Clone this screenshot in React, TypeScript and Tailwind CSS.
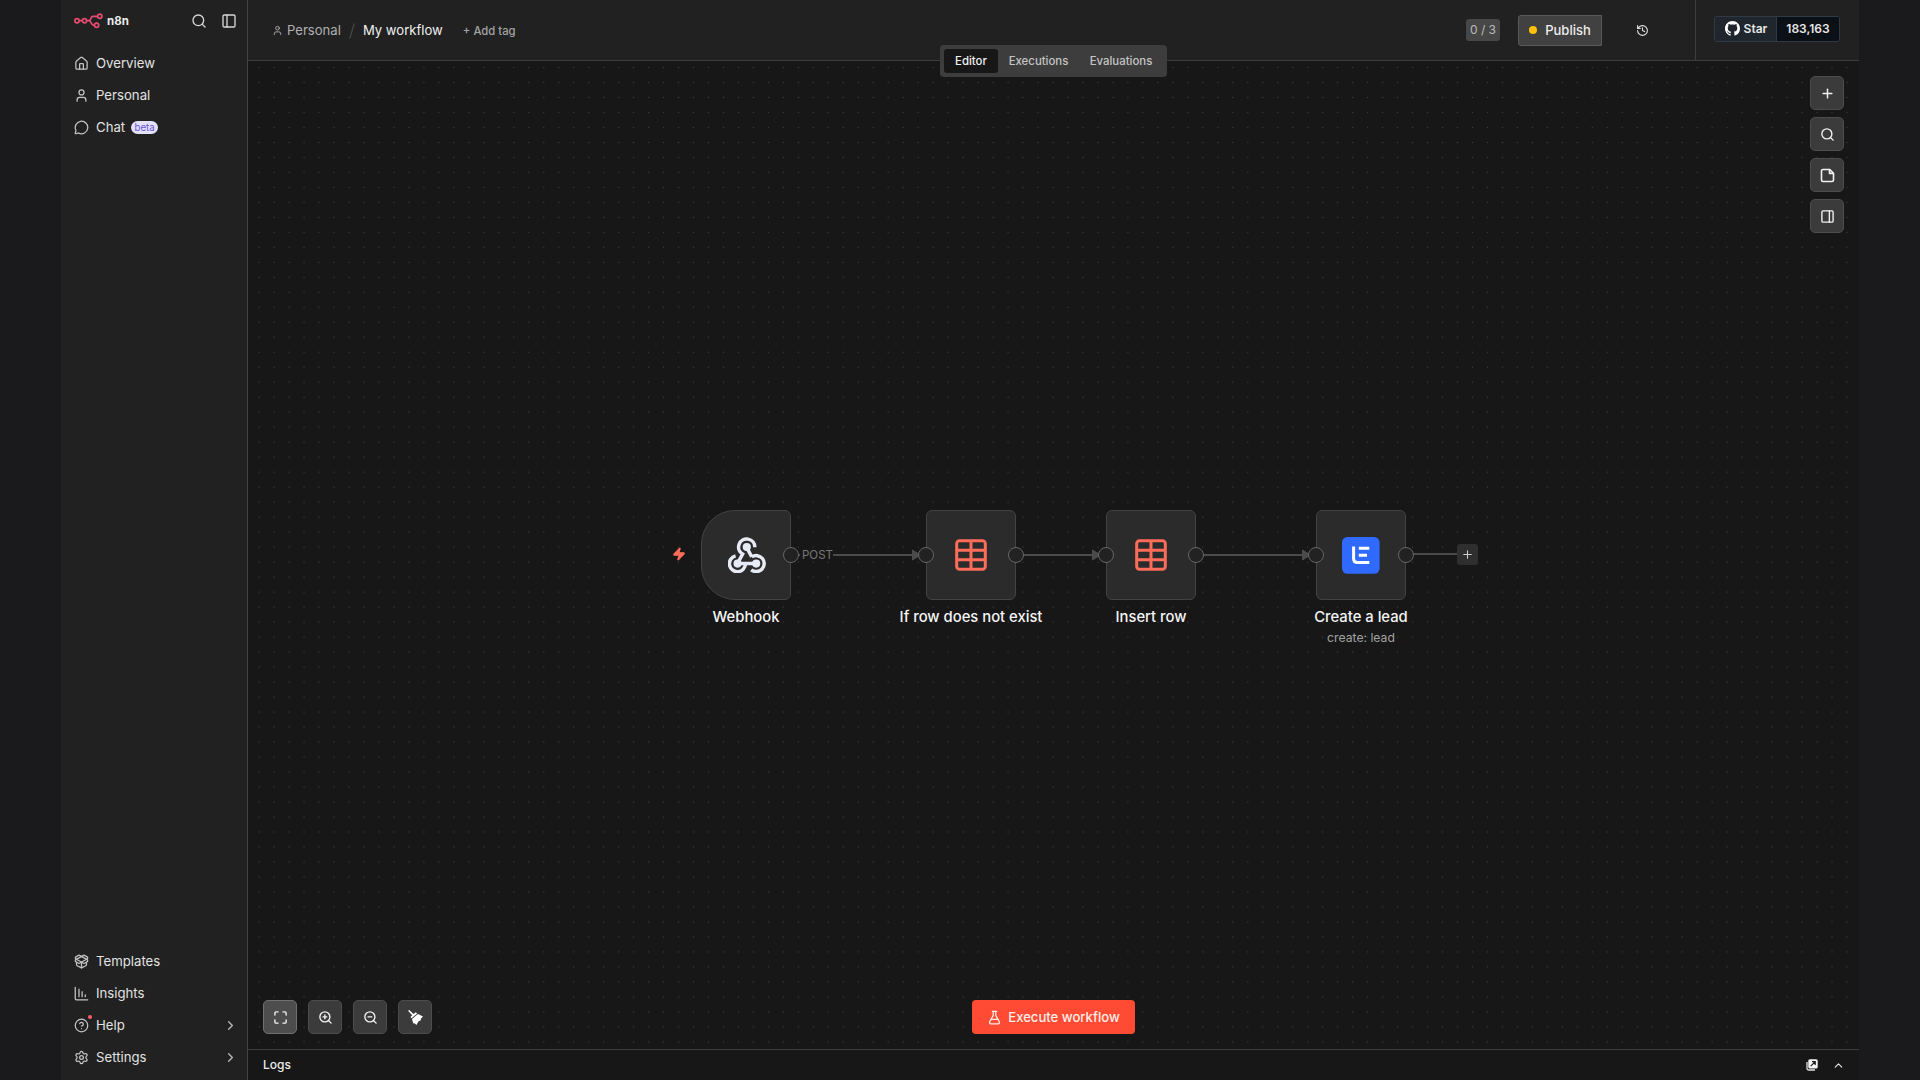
import React from 'react';
import {
  House, User, MessageCircle, Search, PanelLeft, PanelRight, PackageOpen,
  CircleQuestionMark, Settings, ChevronRight, ChevronUp, History, Plus, Maximize,
  ZoomIn, ZoomOut, FlaskConical, Zap
} from 'lucide-react';

interface NavItem { label: string; icon: React.ReactNode; badge?: string; dot?: boolean; chevron?: boolean; }
interface NodeDef { name: string; left: string; icon: React.ReactNode; subtitle?: string; trigger?: boolean; }

const TableIcon = () => (
  <svg width="32" height="32" viewBox="0 0 32 32" fill="none" stroke="#ff6d5a" strokeWidth="3">
    <rect x="1.7" y="1.7" width="28.6" height="28.6" rx="2.8" />
    <path d="M16 1.6v28.8M1.6 11.2h28.8M1.6 20.8h28.8" />
  </svg>
);

const WebhookIcon = () => (
  <svg className="mb-px ml-px" width="38" height="36" viewBox="0 0 38 36" fill="none" stroke="#e8eaf6" strokeWidth="3.5">
    <path d="M18.7 10.6L23.8 19.9M10 26.6H28" />
    <path d="M26.8 10.2A8.1 8.1 0 1 0 14.6 17.1L9.7 26" />
    <path d="M7.6 18.9A8 8 0 1 0 17.4 26.6" />
    <path d="M23.8 19.9A8 8 0 1 1 23.2 32.8" />
    <g fill="#e8eaf6" stroke="none">
      <circle cx="18.8" cy="10" r="4.1" />
      <circle cx="9.6" cy="26.6" r="4.1" />
      <circle cx="28.2" cy="26.6" r="4.1" />
    </g>
  </svg>
);

const LeadIcon = () => (
  <svg width="38" height="37" viewBox="0 0 38 37" fill="none">
    <rect width="37.6" height="36.8" rx="5.5" fill="#3069fe" />
    <path d="M11.6 9.5V21.5Q11.6 25.5 15.6 25.5H27.3M16.8 11.2H27.3M16.8 18.2H25" stroke="#fff" strokeWidth="3" />
  </svg>
);

const Logo = () => (
  <svg width="29" height="16" viewBox="0 0 29 16" fill="none" stroke="#ea4b71" strokeWidth="1.7">
    <circle cx="3" cy="7.7" r="2.1" />
    <circle cx="10.5" cy="7.7" r="2.1" />
    <circle cx="25.8" cy="3.2" r="2.1" />
    <circle cx="22.6" cy="12.3" r="2.1" />
    <path d="M5.2 7.7h3.1M12.7 7.7h2.2c3 0 .8-4.4 4.4-4.4h4.3M14.9 7.7c2.9 0 1.5 4.6 5.5 4.6" />
  </svg>
);

const GithubIcon = () => (
  <svg width="15" height="15" viewBox="0 0 16 16" fill="#fff">
    <path d="M8 0C3.58 0 0 3.58 0 8c0 3.54 2.29 6.53 5.47 7.59.4.07.55-.17.55-.38 0-.19-.01-.82-.01-1.49-2.01.37-2.53-.49-2.69-.94-.09-.23-.48-.94-.82-1.13-.28-.15-.68-.52-.01-.53.63-.01 1.08.58 1.23.82.72 1.21 1.87.87 2.33.66.07-.52.28-.87.51-1.07-1.78-.2-3.64-.89-3.64-3.95 0-.87.31-1.59.82-2.15-.08-.2-.36-1.02.08-2.12 0 0 .67-.21 2.2.82.64-.18 1.32-.27 2-.27s1.36.09 2 .27c1.53-1.04 2.2-.82 2.2-.82.44 1.1.16 1.92.08 2.12.51.56.82 1.27.82 2.15 0 3.07-1.87 3.75-3.65 3.95.29.25.54.73.54 1.48 0 1.07-.01 1.93-.01 2.2 0 .21.15.46.55.38A8 8 0 0 0 16 8c0-4.42-3.58-8-8-8z" />
  </svg>
);

const BroomIcon = () => (
  <svg width="17" height="17" viewBox="0 0 17 17" fill="#fff">
    <path d="M1 1.8L2.2 1L6.5 4.9L8.8 3.2L10.2 4.4L4.6 9.2L3.4 8L5.2 6.2z" />
    <path d="M11 5L16 7.5L13.8 9.8L14 10.9L11.4 12.5L9.4 16L7.6 14.2L6.3 14.4L5 10z" />
  </svg>
);

const NoteIcon = () => (
  <svg width="15" height="15" viewBox="0 0 15 15" fill="none" stroke="#f2f2f2" strokeWidth="1.6" strokeLinejoin="round">
    <path d="M3 1.5h6.8l3.7 3.7V12a1.5 1.5 0 0 1-1.5 1.5H3A1.5 1.5 0 0 1 1.5 12V3A1.5 1.5 0 0 1 3 1.5z" />
    <path d="M9.5 1.7v3.7h3.8" />
  </svg>
);

const PopOutIcon = () => (
  <svg width="12" height="12" viewBox="0 0 12 12">
    <path d="M1 3v6.5A1.5 1.5 0 0 0 2.5 11H9" fill="none" stroke="#e0e0e0" strokeWidth="1.3" />
    <rect x="2.3" y=".3" width="9.4" height="9.2" rx="1.5" fill="#f4f4f4" />
    <path d="M4.7 7.2L9 2.9M6 2.7h3.2v3.2" fill="none" stroke="#171717" strokeWidth="1.2" />
  </svg>
);

const InsightsIcon = () => (
  <svg width="15" height="15" viewBox="0 0 24 24" fill="none" stroke="currentColor" strokeWidth="2" strokeLinecap="round" strokeLinejoin="round">
    <path d="M2 2v18a2 2 0 0 0 2 2h18M8 17V5M13 17V9M18 17v-3" />
  </svg>
);

const topNav: NavItem[] = [
  { label: 'Overview', icon: <House size={15} /> },
  { label: 'Personal', icon: <User size={15} /> },
  { label: 'Chat', icon: <MessageCircle size={15} />, badge: 'beta' },
];

const bottomNav: NavItem[] = [
  { label: 'Templates', icon: <PackageOpen size={15} /> },
  { label: 'Insights', icon: <InsightsIcon /> },
  { label: 'Help', icon: <CircleQuestionMark size={15} />, dot: true, chevron: true },
  { label: 'Settings', icon: <Settings size={15} />, chevron: true },
];

const nodes: NodeDef[] = [
  { name: 'Webhook', left: 'left-[453px]', icon: <WebhookIcon />, trigger: true },
  { name: 'If row does not exist', left: 'left-[678px]', icon: <TableIcon /> },
  { name: 'Insert row', left: 'left-[858px]', icon: <TableIcon /> },
  { name: 'Create a lead', left: 'left-[1068px]', icon: <LeadIcon />, subtitle: 'create: lead' },
];

function NavRow({ item }: { item: NavItem }) {
  return (
    <div className="flex h-8 items-center pl-[13px] pr-[9px] text-[13.2px] text-[#e2e2e2]">
      <span className="relative mr-[7px] flex w-[15px] pb-px text-[#c4c4c4]">
        {item.icon}
        {item.dot && <span className="absolute -top-[3px] left-[14px] size-1 rounded-full bg-[#ff5a6e]" />}
      </span>
      <span>{item.label}</span>
      {item.badge && <span className="mb-px ml-[6px] flex h-[13px] w-[27px] items-center justify-center rounded-full bg-[#e4e1fb] pt-px text-[9.7px] text-[#6554d8]">{item.badge}</span>}
      {item.chevron && <ChevronRight size={15} className="mb-px ml-auto text-[#bdbdbd]" />}
    </div>
  );
}

function CanvasButton({ children, active }: { children: React.ReactNode; active?: boolean }) {
  return (
    <button className={`flex size-[34px] items-center justify-center rounded-[5px] border text-[#f2f2f2] ${active ? 'border-[#707070] bg-[#4d4d4d]' : 'border-[#4d4d4d] bg-[#3b3b3b]'}`}>
      {children}
    </button>
  );
}

function WorkflowNode({ node }: { node: NodeDef }) {
  return (
    <div className={`absolute top-[449px] flex size-[90px] items-center justify-center border border-[#434343] bg-[#2b2b2b] ${node.left} ${node.trigger ? 'rounded-l-[34px] rounded-r-[6px]' : 'rounded-[6px]'}`}>
      {node.icon}
      {!node.trigger && <span className="absolute -left-[9px] top-[36px] size-4 rounded-full border border-[#666666] bg-[#222222]" />}
      <span className="absolute -right-[9px] top-[36px] size-4 rounded-full border border-[#666666] bg-[#222222]" />
      <div className="absolute top-[96px] flex flex-col items-center whitespace-nowrap">
        <span className="text-[14.8px] font-medium leading-[21px] text-[#f5f5f5]">{node.name}</span>
        {node.subtitle && <span className="text-[12.2px] leading-[20px] text-[#a3a3a3]">{node.subtitle}</span>}
      </div>
    </div>
  );
}

export default function App() {
  return (
    <div className="flex h-[1080px] w-[1920px] overflow-hidden bg-[#1a1a1c] pl-[61px] pr-[61px] font-['Inter',sans-serif]">
      <aside className="flex w-[187px] shrink-0 flex-col border-r border-[#444444] bg-[#212121]">
        <div className="flex h-[42px] items-center pl-[13px] pr-[10px] text-[#d8d8d8]">
          <Logo />
          <span className="ml-[4px] pt-px text-[11.5px] font-bold leading-none tracking-[0.1px] text-[#ececec]">n8n</span>
          <Search size={16} className="ml-auto" />
          <PanelLeft size={16} className="ml-[14px]" />
        </div>
        <nav className="mt-[6px]">{topNav.map((item) => <NavRow key={item.label} item={item} />)}</nav>
        <nav className="mb-[6px] mt-auto">{bottomNav.map((item) => <NavRow key={item.label} item={item} />)}</nav>
      </aside>

      <main className="flex w-[1611px] shrink-0 flex-col">
        <header className="flex h-[61px] shrink-0 items-center border-b border-[#3d3d3d] bg-[#212121]">
          <div className="flex items-center pl-[24px] pt-[2px] text-[13.1px]">
            <User size={11} className="text-[#b0b0b0]" />
            <span className="ml-1 text-[#b0b0b0]">Personal</span>
            <svg width="6" height="16" viewBox="0 0 6 16" className="ml-[8px]"><path d="M5.3 .5L.7 15.5" stroke="#484848" strokeWidth="1.2" /></svg>
            <span className="ml-2 text-[#f0f0f0]">My workflow</span>
            <span className="ml-[20px] text-[11.3px] font-medium text-[#a3a3a3]">+ Add tag</span>
          </div>
          <div className="ml-auto flex h-full items-center">
            <span className="flex h-[22px] w-[34px] items-center justify-center rounded-[3px] bg-[#474747] text-[12px] text-[#bcbcbc]">0 / 3</span>
            <button className="ml-[18px] flex h-[31px] w-[84px] items-center justify-center rounded-l-[3px] border border-[#5a5a5a] bg-[#414141] text-[13px] font-medium text-[#ededed]">
              <span className="mr-2 size-2 rounded-full bg-[#ffc107]" /><span className="pt-px">Publish</span>
            </button>
            <History size={13} className="ml-[34px] text-[#e5e5e5]" />
            <div className="ml-[46px] flex h-full items-center border-l border-[#3d3d3d] pb-[3px] pl-[18px] pr-[19px]">
              <div className="flex h-[26px] w-[126px] overflow-hidden rounded-[3px] border border-[#303a45] text-[12px] font-semibold text-[#e6e6e6]">
                <span className="flex w-[62px] items-center justify-center gap-1 border-r border-[#303a45] bg-[#20262d] pl-px"><GithubIcon />Star</span>
                <span className="flex flex-1 items-center justify-center bg-[#0b0f16]">183,163</span>
              </div>
            </div>
          </div>
        </header>

        <section className="relative flex-1 overflow-hidden bg-[#171717]">
          <svg className="absolute inset-0" width="1611" height="988">
            <defs>
              <pattern id="dots" x="3.6" y="-1" width="14.98" height="14.99" patternUnits="userSpaceOnUse">
                <circle cx="7.5" cy="7.5" r="0.7" fill="#3b3b3b" />
              </pattern>
            </defs>
            <rect width="1611" height="988" fill="url(#dots)" />
            <g stroke="#4b4b4b" strokeWidth="2" fill="none">
              <path d="M543 494h9M585 494h86M768 494h83M948 494h113M1158 493h52" />
            </g>
            <g fill="#4b4b4b" stroke="#4b4b4b" strokeLinejoin="round">
              <path d="M664.5 489v10l8-5zM844.5 489v10l8-5zM1054.5 489v10l8-5z" />
            </g>
          </svg>
          <Zap size={14} className="absolute left-[424px] top-[486px] fill-[#ff6d5a] text-[#ff6d5a]" />
          {nodes.map((node) => <WorkflowNode key={node.name} node={node} />)}
          <span className="absolute left-[554px] top-[486px] text-[11.5px] leading-[16px] text-[#777777]">POST</span>
          <span className="absolute left-[1209px] top-[483px] flex size-[21px] items-center justify-center rounded-[3px] bg-[#2f2f2f] text-[#d0d0d0]"><Plus size={13} /></span>

          <div className="absolute right-[15px] top-[15px] flex flex-col gap-[7px]">
            <CanvasButton><Plus size={15} strokeWidth={2.3} /></CanvasButton>
            <CanvasButton><Search size={15} strokeWidth={2.2} /></CanvasButton>
            <CanvasButton><NoteIcon /></CanvasButton>
            <CanvasButton><PanelRight size={15} strokeWidth={2.2} /></CanvasButton>
          </div>
          <div className="absolute bottom-[15px] left-[15px] flex gap-[11px]">
            <CanvasButton active><Maximize size={15} strokeWidth={2.2} /></CanvasButton>
            <CanvasButton><ZoomIn size={15} strokeWidth={2.2} /></CanvasButton>
            <CanvasButton><ZoomOut size={15} strokeWidth={2.2} /></CanvasButton>
            <CanvasButton><BroomIcon /></CanvasButton>
          </div>
          <button className="absolute bottom-[15px] left-[724px] flex h-[34px] w-[163px] items-center justify-center gap-[6px] rounded-[4px] bg-[#ff4b33] text-[13.1px] font-medium text-[#ffeeea]">
            <FlaskConical size={15} /><span className="pt-px">Execute workflow</span>
          </button>
        </section>

        <footer className="flex h-[31px] shrink-0 items-center border-t border-[#3d3d3d] bg-[#171717] pl-[15px] pr-[14px] text-[12px] font-medium text-[#ededed]">
          Logs
          <span className="ml-auto flex items-center gap-[14px]"><PopOutIcon /><ChevronUp size={13} /></span>
        </footer>

        {/* view switcher sits on the header's bottom edge */}
        <div className="absolute left-[940px] top-[45px] flex h-[32px] w-[227px] items-center rounded-[4px] bg-[#3d3d3d] p-[4px] text-[11.4px] font-medium text-[#c4c4c4]">
          <span className="flex h-full w-[54px] items-center justify-center rounded-[3px] bg-[#171717] pt-px text-[#f0f0f0]">Editor</span>
          <span className="flex w-[81px] justify-center pt-px">Executions</span>
          <span className="flex w-[84px] justify-center pt-px">Evaluations</span>
        </div>
      </main>
    </div>
  );
}
